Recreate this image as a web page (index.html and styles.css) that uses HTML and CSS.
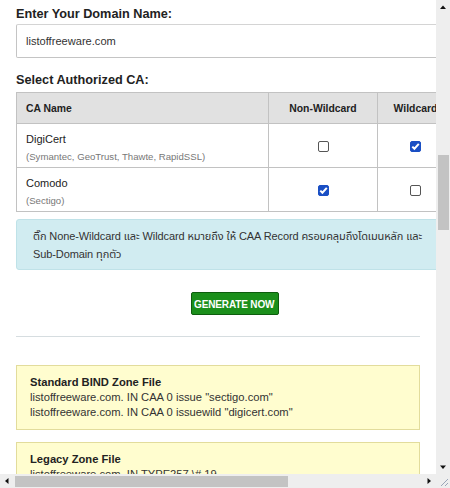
FILE: index.html
```html
<!DOCTYPE html>
<html lang="th">
<head>
<meta charset="utf-8">
<title>CAA Record Generator</title>
<link rel="stylesheet" href="styles.css">
</head>
<body>
<div class="window">
  <div class="viewport">
    <div class="page">
      <h3 class="label first">Enter Your Domain Name:</h3>
      <div class="domain">listoffreeware.com</div>
      <h3 class="label second">Select Authorized CA:</h3>
      <table class="ca">
        <colgroup><col class="c-name"><col class="c-non"><col class="c-wild"></colgroup>
        <thead>
          <tr><th class="th-name">CA Name</th><th>Non-Wildcard</th><th>Wildcard</th></tr>
        </thead>
        <tbody>
          <tr>
            <td class="name"><div class="ca-title">DigiCert</div><div class="ca-sub">(Symantec, GeoTrust, Thawte, RapidSSL)</div></td>
            <td class="box"><span class="check"></span></td>
            <td class="box"><span class="check on"><svg viewBox="0 0 11 11" width="11" height="11"><path d="M2.3 5.6 L4.4 7.7 L8.8 2.8" fill="none" stroke="#fff" stroke-width="2"/></svg></span></td>
          </tr>
          <tr>
            <td class="name"><div class="ca-title">Comodo</div><div class="ca-sub">(Sectigo)</div></td>
            <td class="box"><span class="check on"><svg viewBox="0 0 11 11" width="11" height="11"><path d="M2.3 5.6 L4.4 7.7 L8.8 2.8" fill="none" stroke="#fff" stroke-width="2"/></svg></span></td>
            <td class="box"><span class="check"></span></td>
          </tr>
        </tbody>
      </table>
      <div class="alert">ติ๊ก None-Wildcard และ Wildcard หมายถึง ให้ CAA Record ครอบคลุมถึงโดเมนหลัก และ Sub-Domain ทุกตัว</div>
      <div class="actions"><button class="generate" type="button"><span class="generate-text">GENERATE NOW</span></button></div>
      <hr class="divider">
      <div class="zone">
        <div class="zone-title">Standard BIND Zone File</div>
        <div class="zone-line">listoffreeware.com. IN CAA 0 issue "sectigo.com"</div>
        <div class="zone-line">listoffreeware.com. IN CAA 0 issuewild "digicert.com"</div>
      </div>
      <div class="zone">
        <div class="zone-title">Legacy Zone File</div>
        <div class="zone-line">listoffreeware.com. IN TYPE257 \# 19</div>
      </div>
    </div>
  </div>
  <div class="vscroll">
    <svg class="arrow" viewBox="0 0 14 14" width="14" height="14"><path d="M4 9 L7 5.5 L10 9 Z" fill="#111"/></svg>
    <div class="vtrack"><div class="vthumb"></div></div>
    <svg class="arrow" viewBox="0 0 14 14" width="14" height="14"><path d="M4 5.5 L7 9 L10 5.5 Z" fill="#111"/></svg>
  </div>
  <div class="hscroll">
    <svg class="arrow" viewBox="0 0 14 14" width="14" height="14"><path d="M8.5 4 L5 7 L8.5 10 Z" fill="#111"/></svg>
    <div class="htrack"><div class="hthumb"></div></div>
    <svg class="arrow" viewBox="0 0 14 14" width="14" height="14"><path d="M5.5 4 L9 7 L5.5 10 Z" fill="#111"/></svg>
  </div>
  <div class="corner">
    <svg viewBox="0 0 14 14" width="14" height="14"><path d="M12 5 L5 12 M12 9 L9 12" stroke="#9aa6b8" stroke-width="1"/></svg>
  </div>
</div>
</body>
</html>
```
FILE: styles.css
```css
html, body {
  margin: 0;
  padding: 0;
  background: #fff;
  overflow: hidden;
}

body {
  font-family: "Liberation Sans", Arial, "Noto Sans Thai", "Noto Sans", sans-serif;
  color: #333;
}

.window {
  width: 450px;
  height: 488px;
  display: grid;
  grid-template-columns: 436px 14px;
  grid-template-rows: 474px 14px;
}

.viewport {
  overflow: hidden;
  background: #fff;
}

.page {
  width: 437px;
  padding-left: 16px;
}

.label {
  margin: 0;
  font-size: 12.7px;
  line-height: 16px;
  font-weight: bold;
  color: #222;
}

.label.first {
  padding-top: 6px;
}

.label.second {
  margin: 14px 0 4px;
}

.domain {
  margin-top: 2px;
  box-sizing: border-box;
  height: 34px;
  border: 1px solid #c4c4c4;
  border-top-color: #d4d4d4;
  border-radius: 2px;
  padding-left: 9px;
  display: flex;
  align-items: center;
  font-size: 11.1px;
  color: #333;
}

.ca {
  width: 437px;
  border-collapse: collapse;
  table-layout: fixed;
  font-size: 11px;
}

.c-name { width: 252px; }
.c-non { width: 109px; }
.c-wild { width: 76px; }

.ca th, .ca td {
  border: 1px solid #c2c2c2;
  padding: 0;
}

.ca th {
  height: 30px;
  background: #e1e1e1;
  font-size: 10.4px;
  font-weight: bold;
  color: #222;
  text-align: center;
}

.ca th.th-name {
  text-align: left;
  padding-left: 9px;
}

.ca td.name {
  padding: 8px 9px 3px;
  height: 32px;
}

.ca-title {
  font-size: 11px;
  line-height: 14px;
  color: #222;
}

.ca-sub {
  margin-top: 4px;
  font-size: 9.6px;
  line-height: 14px;
  color: #777;
}

.ca td.box {
  text-align: center;
  vertical-align: middle;
}

.check {
  display: inline-block;
  box-sizing: border-box;
  width: 11px;
  height: 11px;
  border: 1px solid #555;
  border-radius: 2px;
  background: #fff;
  vertical-align: middle;
  position: relative;
}

.check.on {
  background: #1a4fc4;
  border-color: #1a4fc4;
}

.check svg {
  position: absolute;
  left: -1px;
  top: -1px;
}

.alert {
  margin-top: 7px;
  box-sizing: border-box;
  width: 437px;
  padding: 7px 6px 6px 16px;
  background: #d1ecf1;
  border: 1px solid #bfe2e8;
  border-radius: 3px;
  font-size: 11px;
  line-height: 18px;
  letter-spacing: -0.1px;
  color: #333;
}

.actions {
  width: 437px;
  display: flex;
  justify-content: center;
  margin-top: 22px;
}

.generate {
  box-sizing: border-box;
  width: 88px;
  height: 23px;
  padding: 0;
  background: #1b8f1b;
  border: 1px solid #0d5d0d;
  border-radius: 2px;
  color: #fff;
  font-family: "Liberation Sans", Arial, sans-serif;
  font-weight: bold;
  font-size: 11.8px;
  display: flex;
  align-items: center;
  justify-content: center;
  overflow: hidden;
}

.generate-text {
  display: inline-block;
  white-space: nowrap;
  transform: scaleX(0.85);
  letter-spacing: -0.2px;
}

.divider {
  width: 404px;
  margin: 21px 0 0;
  border: 0;
  border-top: 1px solid #d6dde0;
}

.zone {
  width: 404px;
  box-sizing: border-box;
  margin-top: 28px;
  padding: 9px 13px;
  background: #fffdcf;
  border: 1px solid #e2dc9c;
}

.zone + .zone {
  margin-top: 12px;
}

.zone-title {
  font-size: 11.2px;
  line-height: 15px;
  font-weight: bold;
  color: #222;
}

.zone-line {
  font-size: 11.2px;
  line-height: 15px;
  color: #333;
  white-space: nowrap;
}

.vscroll {
  display: flex;
  flex-direction: column;
  background: #eeeeee;
  background-image: radial-gradient(#f8f8f8 0.6px, transparent 0.7px);
  background-size: 2px 2px;
}

.vtrack {
  flex: 1;
  position: relative;
}

.vthumb {
  position: absolute;
  left: 2px;
  right: 1px;
  top: 141px;
  height: 75px;
  background: #c3c3c3;
  background-image: radial-gradient(#b5b5b5 0.6px, transparent 0.7px);
  background-size: 2px 2px;
}

.hscroll {
  display: flex;
  align-items: stretch;
  background: #eeeeee;
  background-image: radial-gradient(#f8f8f8 0.6px, transparent 0.7px);
  background-size: 2px 2px;
}

.hscroll .arrow {
  flex: none;
  align-self: center;
}

.htrack {
  flex: 1;
  position: relative;
}

.hthumb {
  position: absolute;
  left: 1px;
  width: 273px;
  top: 2px;
  bottom: 1px;
  background: #c3c3c3;
  background-image: radial-gradient(#b5b5b5 0.6px, transparent 0.7px);
  background-size: 2px 2px;
}

.arrow {
  display: block;
  flex: none;
}

.corner {
  background: #eeeeee;
}

.corner svg {
  display: block;
}
```
